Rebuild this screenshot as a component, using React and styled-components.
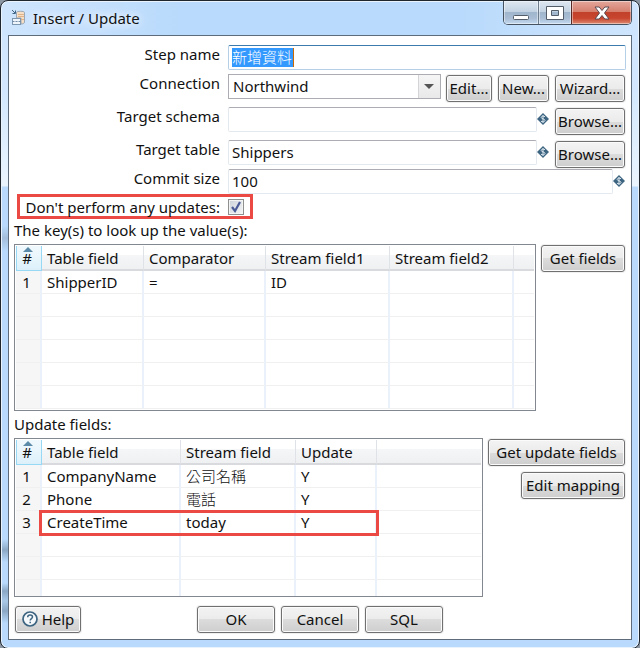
import styled, { createGlobalStyle } from 'styled-components'

const keyColumns = [
  { title: 'Table field', width: 102 },
  { title: 'Comparator', width: 122 },
  { title: 'Stream field1', width: 124 },
  { title: 'Stream field2', width: 124 },
]

const keyRows = [['ShipperID', '=', 'ID', ''], [], [], [], [], []]

const updateColumns = [
  { title: 'Table field', width: 139 },
  { title: 'Stream field', width: 115 },
  { title: 'Update', width: 81 },
]

const updateRows = [
  ['CompanyName', '公司名稱', 'Y'],
  ['Phone', '電話', 'Y'],
  ['CreateTime', 'today', 'Y'],
  [],
  [],
  [],
]

const langOf = text => /[\u4e00-\u9fff]/.test(text) ? 'zh-Hant' : undefined

const StepIcon = () => (
  <svg width="16" height="18" viewBox="0 0 16 18" aria-hidden="true">
    <path d="M5.500 3.500c0-1.600 8-1.600 8 0v9.500c0 1.600-2 2-3.500 2V9H5.500z" fill="#f6dfc4" stroke="#9aa6b3" />
    <path d="M7 5.500h6M7 7.500h6M10 10.500h3" stroke="#dfb48a" />
    <path d="M1 1l3 3M4.500 1.500v3H1.500" fill="none" stroke="#3f6686" />
    <rect x="1.500" y="9.500" width="8" height="6" fill="#eef4fa" stroke="#7d97b0" />
    <path d="M1.500 12.500h8" stroke="#6f8ba5" strokeDasharray="2 1" />
  </svg>
)

const VariableIcon = () => (
  <svg width="12" height="12" viewBox="0 0 12 12" aria-hidden="true">
    <path d="M6 0l6 6-6 6-6-6z" fill="#3d6480" />
    <path d="M8 3.700C7 2.800 4.200 2.900 4.200 4.500S8 5.700 8 7.400 5 9.100 4 8.200M6 2v8" fill="none" stroke="#dce8f0" strokeWidth="1" />
  </svg>
)

const HelpIcon = () => (
  <svg width="16" height="16" viewBox="0 0 16 16" aria-hidden="true">
    <circle cx="8" cy="8" r="7" fill="#f6f9fb" stroke="#3d6480" strokeWidth="1.700" />
    <path d="M5.700 6.200c0-3 4.800-2.800 4.800-.2C10.500 7.600 8.200 7.600 8.200 9.500M8.200 10.700v1.600" fill="none" stroke="#3d6480" strokeWidth="1.500" />
  </svg>
)

const MinimizeIcon = () => (
  <svg width="18" height="16" viewBox="0 0 18 16" aria-hidden="true">
    <rect x="1.500" y="10.500" width="15" height="4" rx="1" fill="#fff" stroke="#535c69" />
  </svg>
)

const MaximizeIcon = () => (
  <svg width="18" height="16" viewBox="0 0 18 16" aria-hidden="true">
    <path d="M.5 1.500h17v13H.5zM5.500 5.500v5h7v-5z" fill="#fff" fillRule="evenodd" stroke="#535c69" />
  </svg>
)

const CloseIcon = () => (
  <svg width="18" height="16" viewBox="0 0 18 16" aria-hidden="true">
    <path d="M2 2h4.200L9 5.500 11.800 2H16l-4.500 6 4.500 6h-4.200L9 10.500 6.200 14H2l4.500-6z" fill="#fff" stroke="#5b4a52" strokeLinejoin="round" />
  </svg>
)

const Grid = ({ label, columns, rows }) => (
  <GridTable aria-label={label}>
    <colgroup>
      <Col $width={26} />
      {columns.map(c => <Col key={c.title} $width={c.width} />)}
      <col />
    </colgroup>
    <thead>
      <tr>
        <NumberHead>#</NumberHead>
        {columns.map(c => <HeadCell key={c.title}>{c.title}</HeadCell>)}
        <HeadCell />
      </tr>
    </thead>
    <tbody>
      {rows.map((row, i) => (
        <tr key={i}>
          <NumberCell>{row.length ? i + 1 : ''}</NumberCell>
          {columns.map((c, j) => <Cell key={c.title} lang={langOf(row[j])}>{row[j]}</Cell>)}
          <Cell />
        </tr>
      ))}
    </tbody>
  </GridTable>
)

const App = () => {
  return (
    <>
      <GlobalStyle />
      <Window>
        <TitleBar>
          <StepIcon />
          <Title>Insert / Update</Title>
          <WindowControls>
            <ControlButton $width={34} aria-label="Minimize"><MinimizeIcon /></ControlButton>
            <ControlButton $width={33} aria-label="Maximize"><MaximizeIcon /></ControlButton>
            <ControlButton $width={60} $close aria-label="Close"><CloseIcon /></ControlButton>
          </WindowControls>
        </TitleBar>

        <Content>
          <Form>
            <FormRow $gap={4}>
              <Label htmlFor="step">Step name</Label>
              <StepBox>
                <StepInput id="step" lang="zh-Hant" defaultValue="新增資料" />
              </StepBox>
            </FormRow>
            <FormRow $gap={5}>
              <Label htmlFor="connection">Connection</Label>
              <SelectBox>
                <Select id="connection" defaultValue="Northwind">
                  <option>Northwind</option>
                </Select>
              </SelectBox>
              <ButtonGroup>
                <Button $width={46}>Edit...</Button>
                <Button $width={51}>New...</Button>
                <Button $width={70}>Wizard...</Button>
              </ButtonGroup>
            </FormRow>
            <FormRow $gap={5}>
              <Label htmlFor="schema">Target schema</Label>
              <Input id="schema" />
              <VariableIcon />
              <ButtonGroup><Button $width={70}>Browse...</Button></ButtonGroup>
            </FormRow>
            <FormRow $gap={1}>
              <Label htmlFor="table">Target table</Label>
              <Input id="table" defaultValue="Shippers" />
              <VariableIcon />
              <ButtonGroup><Button $width={70}>Browse...</Button></ButtonGroup>
            </FormRow>
            <FormRow $gap={0}>
              <Label htmlFor="commit">Commit size</Label>
              <Input id="commit" defaultValue="100" />
              <VariableIcon />
            </FormRow>
            <CheckRow>
              <Label htmlFor="noupdate">Don't perform any updates:</Label>
              <Checkbox id="noupdate" type="checkbox" defaultChecked />
            </CheckRow>
          </Form>

          <SectionTitle>The key(s) to look up the value(s):</SectionTitle>
          <Section>
            <GridFrame $height={167}>
              <Grid label="Lookup keys" columns={keyColumns} rows={keyRows} />
            </GridFrame>
            <SideButtons>
              <Button $width={84}>Get fields</Button>
            </SideButtons>
          </Section>

          <UpdateTitle>Update fields:</UpdateTitle>
          <Section>
            <GridFrame $height={159}>
              <Grid label="Update fields" columns={updateColumns} rows={updateRows} />
              <RowMark />
            </GridFrame>
            <SideButtons>
              <Button $width={137}>Get update fields</Button>
              <Button $width={104}>Edit mapping</Button>
            </SideButtons>
          </Section>

          <Footer>
            <Button $width={66}><HelpIcon />Help</Button>
            <FooterCenter>
              <Button $width={78}>OK</Button>
              <Button $width={78}>Cancel</Button>
              <Button $width={78}>SQL</Button>
            </FooterCenter>
          </Footer>
        </Content>
      </Window>
    </>
  )
}

const GlobalStyle = createGlobalStyle`
  * {
    box-sizing: border-box;
  }
  body {
    margin: 0;
    background: #8d97a3;
  }
  body, button, input, select, table {
    font-family: 'Noto Sans', 'Noto Sans CJK TC', sans-serif;
    font-size: 15px;
    line-height: 20px;
    color: #111;
  }
`

/* glass frame: the blurred desktop shows through the left edge */
const Window = styled.div`
  min-height: 100vh;
  display: flex;
  flex-direction: column;
  padding: 0 7px 8px;
  border: 1px solid #20262e;
  border-radius: 8px;
  background:
    linear-gradient(90deg, #cfe5fd 0, #b9dafc 180px, #b9dafc calc(100% - 180px), #cfe5fd 100%) top / 100% 35px no-repeat,
    linear-gradient(180deg, transparent 225px, #a3bedb 237px, transparent 250px, transparent 538px, #8ba7c5 549px, transparent 561px, transparent 582px, #8ba7c5 590px, #a9c8e8 600px, #8ba7c5 610px, transparent 622px) left / 7px 100% no-repeat,
    linear-gradient(180deg, #cfe5fd 0, #d3e8fe 90px, #eaf4fe 185px, #b9dafc 186px, #b9dafc 100%);
  box-shadow: inset 0 0 0 1px #e8f3fe;
`

const TitleBar = styled.header`
  height: 34px;
  display: flex;
  align-items: center;
  gap: 6px;
  padding-left: 3px;
`

const Title = styled.h1`
  flex: 1;
  margin: 0;
  font-size: 15px;
  font-weight: 400;
  text-shadow: 0 0 8px #fff, 0 0 12px #fff;
`

const WindowControls = styled.div`
  align-self: flex-start;
  display: flex;
  border: 1px solid #46525f;
  border-top: 0;
  border-radius: 0 0 5px 5px;
  overflow: hidden;
`

const ControlButton = styled.button`
  width: ${p => p.$width}px;
  height: 23px;
  display: flex;
  align-items: center;
  justify-content: center;
  padding: 0;
  border: 0;
  border-left: ${p => p.$close ? '1px solid #5a2a26' : '1px solid #6d7c8d'};
  background: ${p => p.$close
    ? 'linear-gradient(180deg, #e3a79b 0, #d6806f 46%, #c2412a 50%, #c8452e 75%, #dd8c72 100%)'
    : 'linear-gradient(180deg, #dde7f1 0, #c3d2e2 46%, #a0b6cd 50%, #a8bdd4 75%, #c4daf0 100%)'};
  box-shadow: inset 0 0 0 1px rgba(255, 255, 255, 0.45);
  &:first-child {
    border-left: 0;
  }
`

const Content = styled.main`
  flex: 1;
  padding: 9px 5px 6px;
  border: 1px solid #5d6b7a;
  background: #fff;
`

const Form = styled.form`
  display: flex;
  flex-direction: column;
`

const FormRow = styled.div`
  display: flex;
  align-items: flex-start;
  margin-bottom: ${p => p.$gap}px;
  > svg {
    flex: none;
    margin: 6px 1px 0 0;
  }
`

const Label = styled.label`
  flex: none;
  width: 206px;
  margin-right: 8px;
  line-height: 18px;
  text-align: right;
`

const Input = styled.input`
  flex: 1;
  min-width: 0;
  height: 25px;
  padding: 0 3px 1px;
  border: 1px solid #e3e9ef;
  border-top-color: #abadb3;
  border-radius: 2px;
  outline: 0;
  background: #fff;
`

const StepBox = styled.div`
  flex: 1;
  display: flex;
  height: 25px;
  padding: 2px 3px;
  border: 1px solid #b5cfe7;
  border-top-color: #3d7bad;
  border-radius: 2px;
`

/* the value is shown selected, with the caret behind it */
const StepInput = styled.input`
  width: 62px;
  height: 19px;
  padding: 0 0 2px;
  border: 0;
  border-right: 1px solid #cc6a00;
  outline: 0;
  background: #3399ff;
  color: #fff;
  font-weight: 300;
`

const SelectBox = styled.div`
  flex: 1;
  position: relative;
  &::after {
    content: '';
    position: absolute;
    top: 1px;
    right: 1px;
    width: 21px;
    height: 23px;
    border-left: 1px solid #d4d4d8;
    background: linear-gradient(180deg, #f5f5f5, #e9e9ea);
    pointer-events: none;
  }
  &::before {
    content: '';
    position: absolute;
    z-index: 1;
    top: 10px;
    right: 7px;
    border: 5px solid transparent;
    border-top-color: #555;
    border-bottom: 0;
    pointer-events: none;
  }
`

const Select = styled.select`
  display: block;
  width: 100%;
  height: 25px;
  padding: 0 4px 2px;
  border: 1px solid #abadb3;
  border-radius: 0;
  outline: 0;
  appearance: none;
  background: #fff;
`

const ButtonGroup = styled.div`
  display: flex;
  gap: 6px;
  margin: 1px 1px 0 5px;
`

const Button = styled.button.attrs({ type: 'button' })`
  flex: none;
  width: ${p => p.$width}px;
  height: 27px;
  display: flex;
  align-items: center;
  justify-content: center;
  gap: 4px;
  padding: 0 0 1px;
  border: 1px solid #707070;
  border-radius: 3px;
  background: linear-gradient(180deg, #f3f3f3 0, #ebebeb 50%, #dcdcdc 50%, #cecece 100%);
  box-shadow: inset 0 0 0 1px #fbfbfb, 0 0 0 1px #f0f0f0;
  white-space: nowrap;
`

const CheckRow = styled.div`
  align-self: flex-start;
  display: flex;
  align-items: center;
  height: 25px;
  margin-left: 3px;
  padding-right: 6px;
  border: 3px solid #ea4a43;
  ${Label} {
    width: 200px;
  }
`

const Checkbox = styled.input`
  width: 16px;
  height: 16px;
  margin: 0;
  appearance: none;
  border: 1px solid #8e8f8f;
  background:
    url("data:image/svg+xml,%3Csvg xmlns='http://www.w3.org/2000/svg' viewBox='0 0 14 14'%3E%3Cpath d='M3 7l3 4 5-9' fill='none' stroke='%234a5b97' stroke-width='2.200'/%3E%3C/svg%3E"),
    linear-gradient(135deg, #cdd3da, #f4f5f6);
  box-shadow: inset 0 0 0 1px #f4f4f4;
`

const SectionTitle = styled.h2`
  height: 25px;
  margin: 0;
  padding-top: 1px;
  font-size: 15px;
  font-weight: 400;
`

const UpdateTitle = styled(SectionTitle)`
  height: 27px;
  padding-top: 3px;
`

const Section = styled.section`
  display: flex;
  align-items: flex-start;
  gap: 5px;
`

const GridFrame = styled.div`
  flex: 1;
  position: relative;
  min-width: 0;
  height: ${p => p.$height}px;
  padding: 1px;
  border: 1px solid #828790;
  overflow: hidden;
`

const GridTable = styled.table`
  width: 100%;
  table-layout: fixed;
  border-collapse: separate;
  border-spacing: 0;
`

const Col = styled.col`
  width: ${p => p.$width}px;
`

const HeadCell = styled.th`
  height: 25px;
  padding: 0 0 0 5px;
  border-right: 1px solid #dfe2e6;
  border-bottom: 2px solid #d8dadd;
  background: linear-gradient(180deg, #fff 0, #fff 40%, #f5f6f7 41%, #eff0f2 100%);
  font-weight: 400;
  text-align: left;
  &:last-child {
    border-right: 0;
  }
`

const NumberHead = styled(HeadCell)`
  position: relative;
  padding: 0 4px 0 0;
  border: 1px solid #97d9f5;
  border-top: 0;
  background: linear-gradient(180deg, #f0f9fd 0, #e9f6fc 45%, #dcf0fa 100%);
  text-align: center;
  &::before {
    content: '';
    position: absolute;
    top: 1px;
    left: 6px;
    border: 5px solid transparent;
    border-top: 0;
    border-bottom-color: #5a8aa8;
  }
`

const Cell = styled.td`
  height: 23px;
  padding: 0 0 0 5px;
  border-right: 2px solid #ebf1fa;
  border-bottom: 1px solid #f0f0f0;
  white-space: nowrap;
  &:lang(zh) {
    font-weight: 300;
  }
  &:last-child {
    border-right: 0;
  }
`

const NumberCell = styled(Cell)`
  padding: 0 3px 0 0;
  background: #f6f6f6;
  text-align: center;
`

const RowMark = styled.div`
  position: absolute;
  top: 71px;
  left: 24px;
  width: 340px;
  height: 26px;
  border: 3px solid #ea4a43;
  pointer-events: none;
`

const SideButtons = styled.div`
  display: flex;
  flex-direction: column;
  align-items: flex-end;
  gap: 6px;
  margin: 1px 1px 0 0;
`

const Footer = styled.footer`
  display: grid;
  grid-template-columns: 1fr auto 1fr;
  padding: 9px 1px 0;
`

const FooterCenter = styled.div`
  display: flex;
  gap: 6px;
`

export default App
